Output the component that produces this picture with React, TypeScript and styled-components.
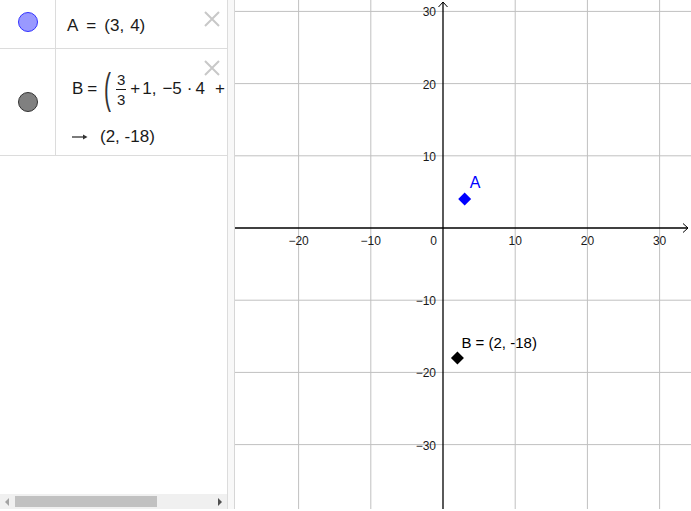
import styled, { createGlobalStyle } from "styled-components";

const GlobalStyle = createGlobalStyle`
  html, body {
    margin: 0;
    padding: 0;
    background: #fff;
  }
  body {
    font-family: "Liberation Sans", Arial, sans-serif;
  }
`;

const ORIGIN_X = 208;
const ORIGIN_Y = 228;
const UNIT = 7.22;
const GRAPH_W = 456;
const GRAPH_H = 509;

const toX = (v: number) => ORIGIN_X + v * UNIT;
const toY = (v: number) => ORIGIN_Y - v * UNIT;

const Page = styled.div`
  display: flex;
  width: 691px;
  height: 511px;
  overflow: hidden;
`;

const AlgebraPanel = styled.div`
  width: 227px;
  height: 509px;
  display: flex;
  flex-direction: column;
  border-right: 1px solid #dcdcdc;
  background: #fff;
  overflow: hidden;
`;

const Splitter = styled.div`
  width: 6px;
  height: 509px;
  background: #f8f8f8;
  border-right: 1px solid #d6d6d6;
`;

const Row = styled.div<{ $height: number }>`
  display: flex;
  height: ${(p) => p.$height}px;
  border-bottom: 1px solid #dcdcdc;
  position: relative;
`;

const Marker = styled.div<{ $shift: number }>`
  width: 56px;
  flex-shrink: 0;
  display: flex;
  align-items: center;
  justify-content: center;
  padding-bottom: ${(p) => p.$shift}px;
  box-sizing: border-box;
  border-right: 1px solid #dcdcdc;
`;

const Dot = styled.div<{ $fill: string; $ring: string }>`
  width: 18px;
  height: 18px;
  border-radius: 50%;
  background: ${(p) => p.$fill};
  border: 1px solid ${(p) => p.$ring};
`;

const Body = styled.div<{ $top: number }>`
  flex: 1;
  display: flex;
  flex-direction: column;
  justify-content: center;
  padding: ${(p) => p.$top}px 0 0 11px;
  font-size: 17px;
  color: #1a1a1a;
  white-space: nowrap;
  overflow: hidden;
`;

const Line = styled.div`
  display: flex;
  align-items: center;
`;

const Op = styled.span<{ $left: number; $right: number }>`
  margin: 0 ${(p) => p.$right}px 0 ${(p) => p.$left}px;
`;

const Comma = styled.span`
  margin-right: 6px;
`;

const Close = styled.div<{ $top: number }>`
  position: absolute;
  right: 7px;
  top: ${(p) => p.$top}px;
  width: 16px;
  height: 16px;
`;

const Formula = styled(Line)`
  padding-left: 5px;
`;

const BigParen = styled.span`
  display: inline-block;
  font-size: 42px;
  font-weight: 300;
  line-height: 42px;
  color: #333;
  width: 12px;
  transform: scaleX(0.5);
  transform-origin: left center;
`;

const Frac = styled.span`
  display: inline-flex;
  flex-direction: column;
  align-items: center;
  font-size: 15px;
  line-height: 15px;
  margin-right: 1px;
`;

const FracBar = styled.span`
  width: 10px;
  height: 1px;
  background: #1a1a1a;
  margin: 2px 0;
`;

const Output = styled(Line)`
  gap: 12px;
  padding-left: 5px;
  margin-top: 17px;
`;

const Filler = styled.div`
  flex: 1;
`;

const ScrollBar = styled.div`
  height: 15px;
  background: #f0f0f0;
  display: flex;
  align-items: center;
  padding: 0 4px;
`;

const Thumb = styled.div`
  width: 142px;
  height: 11px;
  background: #c1c1c1;
  margin: 0 auto 0 5px;
`;

const Graph = styled.svg`
  display: block;
  flex-shrink: 0;
`;

const CloseIcon = () => (
  <svg width="16" height="16" viewBox="0 0 16 16">
    <path d="M1 1 L15 15 M15 1 L1 15" stroke="#c8c8c8" strokeWidth="2" />
  </svg>
);

const ArrowIcon = () => (
  <svg width="16" height="8" viewBox="0 0 16 8">
    <path d="M0 4 H14" stroke="#333" strokeWidth="1.3" />
    <path d="M11 1.5 L15.5 4 L11 6.5 Z" fill="#333" />
  </svg>
);

const ticks = [-3, -2, -1, 1, 2, 3];
const minus = (n: number) => (n < 0 ? `\u2212${-n}` : `${n}`);
const labelFont = "Liberation Sans, Arial, sans-serif";

export default function App() {
  const ax = toX(3);
  const ay = toY(4);
  const bx = toX(2);
  const by = toY(-18);
  const d = 6.5;

  return (
    <Page>
      <GlobalStyle />
      <AlgebraPanel>
        <Row $height={48}>
          <Marker $shift={4}>
            <Dot $fill="#9999ff" $ring="#3333ff" />
          </Marker>
          <Body $top={4}>
            <Line>
              A<Op $left={8} $right={8}>=</Op>(3<Comma>,</Comma>4)
            </Line>
          </Body>
          <Close $top={11}>
            <CloseIcon />
          </Close>
        </Row>
        <Row $height={106}>
          <Marker $shift={0}>
            <Dot $fill="#808080" $ring="#333" />
          </Marker>
          <Body $top={11}>
            <Formula>
              B<Op $left={4} $right={7}>=</Op>
              <BigParen>(</BigParen>
              <Frac>
                <span>3</span>
                <FracBar />
                <span>3</span>
              </Frac>
              <Op $left={3} $right={2}>+</Op>1<Comma>,</Comma>−5<Op $left={5} $right={3}>·</Op>4<Op $left={10} $right={0}>+</Op>
            </Formula>
            <Output>
              <ArrowIcon />
              <span>(2, -18)</span>
            </Output>
          </Body>
          <Close $top={11}>
            <CloseIcon />
          </Close>
        </Row>
        <Filler />
        <ScrollBar>
          <svg width="6" height="10" viewBox="0 0 6 10">
            <path d="M5 1 L1 5 L5 9 Z" fill="#a3a3a3" />
          </svg>
          <Thumb />
          <svg width="6" height="10" viewBox="0 0 6 10">
            <path d="M1 1 L5 5 L1 9 Z" fill="#505050" />
          </svg>
        </ScrollBar>
      </AlgebraPanel>
      <Splitter />
      <Graph width={GRAPH_W} height={GRAPH_H}>
        <rect width={GRAPH_W} height={GRAPH_H} fill="#fff" />
        {ticks.map((t) => (
          <g key={t}>
            <line x1={toX(t * 10)} x2={toX(t * 10)} y1={0} y2={GRAPH_H} stroke="#c0c0c0" />
            <line x1={0} x2={GRAPH_W} y1={toY(t * 10)} y2={toY(t * 10)} stroke="#c0c0c0" />
          </g>
        ))}
        <line x1={0} x2={GRAPH_W - 3} y1={ORIGIN_Y} y2={ORIGIN_Y} stroke="#000" strokeWidth={1.3} />
        <line x1={ORIGIN_X} x2={ORIGIN_X} y1={2} y2={GRAPH_H} stroke="#000" strokeWidth={1.3} />
        <path
          d={`M${GRAPH_W - 8} ${ORIGIN_Y - 4.5} L${GRAPH_W - 3} ${ORIGIN_Y} L${GRAPH_W - 8} ${ORIGIN_Y + 4.5}`}
          fill="none"
          stroke="#000"
        />
        <path
          d={`M${ORIGIN_X - 4.5} 7 L${ORIGIN_X} 2 L${ORIGIN_X + 4.5} 7`}
          fill="none"
          stroke="#000"
        />
        <g fontFamily={labelFont} fontSize="12" fill="#1a1a1a">
          {ticks
            .filter((t) => toX(t * 10) > 10)
            .map((t) => (
              <text key={`x${t}`} x={toX(t * 10)} y={ORIGIN_Y + 17} textAnchor="middle">
                {minus(t * 10)}
              </text>
            ))}
          {ticks.map((t) => (
            <text key={`y${t}`} x={ORIGIN_X - 7} y={toY(t * 10) + 5} textAnchor="end">
              {minus(t * 10)}
            </text>
          ))}
          <text x={ORIGIN_X - 6} y={ORIGIN_Y + 17} textAnchor="end">
            0
          </text>
        </g>
        <path d={`M${ax} ${ay - d} L${ax + d} ${ay} L${ax} ${ay + d} L${ax - d} ${ay} Z`} fill="#0000ff" />
        <text x={ax + 5} y={ay - 11} fontFamily={labelFont} fontSize="16" fill="#0000ff">
          A
        </text>
        <path d={`M${bx} ${by - d} L${bx + d} ${by} L${bx} ${by + d} L${bx - d} ${by} Z`} fill="#000" />
        <text x={bx + 4} y={by - 10} fontFamily={labelFont} fontSize="15" fill="#000">
          B = (2, -18)
        </text>
      </Graph>
    </Page>
  );
}
